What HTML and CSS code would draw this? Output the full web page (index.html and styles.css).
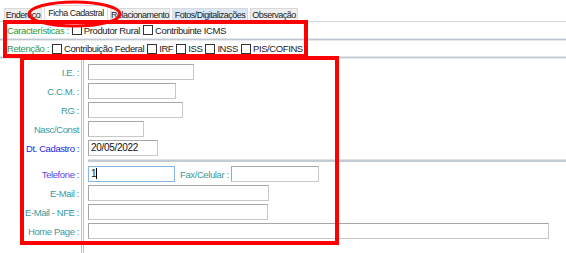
FILE: index.html
```html
<!DOCTYPE html>
<html lang="pt">
<head>
<meta charset="utf-8">
<link rel="stylesheet" href="styles.css">
</head>
<body>
<div class="page">
  <div class="tabs">
    <div class="tab t1">Endereço</div>
    <div class="tab t2 active">Ficha Cadastral</div>
    <div class="tab t3">Relacionamento</div>
    <div class="tab t4 hover">Fotos/Digitalizações</div>
    <div class="tab t5">Observação</div>
  </div>
  <div class="panel">
    <div class="optrow r1">
      <span class="grp green">Características :</span>
      <span class="cb"></span><span class="opt">Produtor Rural</span>
      <span class="cb"></span><span class="opt">Contribuinte ICMS</span>
    </div>
    <div class="sep"></div>
    <div class="optrow r2">
      <span class="grp green2">Retenção :</span>
      <span class="cb"></span><span class="opt">Contribuição Federal</span>
      <span class="cb"></span><span class="opt">IRF</span>
      <span class="cb"></span><span class="opt">ISS</span>
      <span class="cb"></span><span class="opt">INSS</span>
      <span class="cb"></span><span class="opt">PIS/COFINS</span>
    </div>
    <div class="sep"></div>
    <div class="form">
      <div class="frow"><label class="lbl">I.E. :</label><span class="inp w-ie"></span></div>
      <div class="frow"><label class="lbl">C.C.M. :</label><span class="inp w-ccm"></span></div>
      <div class="frow"><label class="lbl">RG :</label><span class="inp w-rg"></span></div>
      <div class="frow"><label class="lbl">Nasc/Const</label><span class="inp w-nasc"></span></div>
      <div class="frow"><label class="lbl blue">Dt. Cadastro :</label><span class="inp w-dt">20/05/2022</span></div>
      <div class="hsep"></div>
      <div class="frow"><label class="lbl violet">Telefone :</label><span class="inp w-tel focus">1<span class="caret"></span></span><label class="lbl2">Fax/Celular :</label><span class="inp w-fax"></span></div>
      <div class="frow"><label class="lbl">E-Mail :</label><span class="inp w-mail"></span></div>
      <div class="frow"><label class="lbl">E-Mail - NFE :</label><span class="inp w-nfe"></span></div>
      <div class="frow last"><label class="lbl">Home Page :</label><span class="inp w-home"></span></div>
    </div>
  </div>
  <svg class="marks" width="566" height="253" viewBox="0 0 566 253">
    <ellipse cx="74.5" cy="14" rx="45.5" ry="12" fill="none" stroke="#ff0000" stroke-width="3"/>
    <rect x="5" y="22" width="301" height="34" fill="none" stroke="#ff0000" stroke-width="4"/>
    <rect x="22" y="58" width="315" height="185" fill="none" stroke="#ff0000" stroke-width="4"/>
  </svg>
</div>
</body>
</html>
```
FILE: styles.css
```css
html, body {
  margin: 0;
  padding: 0;
  background: #ffffff;
}
body {
  font-family: "Liberation Sans", Arial, sans-serif;
  font-size: 9.5px;
  letter-spacing: -0.4px;
  color: #222;
  width: 566px;
  height: 253px;
  overflow: hidden;
}
.page {
  position: relative;
  width: 566px;
  height: 253px;
  overflow: hidden;
}
.tabs {
  display: flex;
  align-items: flex-end;
  height: 22px;
  padding-left: 4px;
  box-sizing: border-box;
  border-bottom: 1px solid #d6d6d6;
}
.tab {
  box-sizing: border-box;
  height: 13px;
  line-height: 12px;
  margin-right: 2px;
  background: #eeeeee;
  border: 1px solid #d9d9d9;
  border-bottom: none;
  color: #222;
  white-space: nowrap;
  text-align: center;
  font-size: 9px;
  letter-spacing: -0.5px;
}
.t1 { width: 38px; }
.t2 { width: 64px; }
.t3 { width: 60px; }
.t4 { width: 76px; }
.t5 { width: 48px; }
.tab.hover { background: #dce7f5; }
.tab.active {
  background: #ffffff;
  height: 17px;
  line-height: 15px;
  margin-bottom: -1px;
}
.optrow {
  display: flex;
  align-items: center;
  padding-left: 7px;
  white-space: nowrap;
}
.r1 { height: 16px; }
.r2 { height: 15px; }
.grp { margin-right: 3px; }
.green { color: #2f9a3c; }
.green2 { color: #2e9a62; }
.cb {
  width: 8px;
  height: 8px;
  border: 1px solid #333;
  background: #fff;
  margin-right: 2px;
}
.opt { margin-right: 3px; }
.sep {
  height: 1px;
  border-top: 1px solid #e3e6ea;
  border-bottom: 1px solid #e8ebee;
  background: #bfc8d2;
}
.form {
  height: 194px;
  box-sizing: border-box;
  padding-top: 5px;
  background:
    linear-gradient(#b9c1ca, #b9c1ca) 81px 0 / 1px 100% no-repeat,
    linear-gradient(#b9c1ca, #b9c1ca) 83px 0 / 1px 100% no-repeat;
}
.frow {
  display: flex;
  align-items: center;
  height: 16px;
  margin-bottom: 3px;
}
.lbl {
  width: 79px;
  text-align: right;
  margin-right: 9px;
  color: #3a9a9e;
  white-space: nowrap;
}
.lbl.blue { color: #2727e6; }
.lbl.violet { color: #5548e0; }
.lbl2 {
  color: #3a9a9e;
  margin-left: 5px;
  margin-right: 2px;
  white-space: nowrap;
}
.inp {
  box-sizing: border-box;
  height: 16px;
  line-height: 14px;
  padding-left: 2px;
  border: 1px solid #a6a6a6;
  border-right-color: #c8c8c8;
  border-bottom-color: #c8c8c8;
  background: #fff;
  color: #111;
  font-size: 10px;
  letter-spacing: -0.3px;
}
.inp.focus { border-color: #86b6e6; }
.caret {
  display: inline-block;
  width: 1px;
  height: 11px;
  background: #000;
  vertical-align: -2px;
}
.w-ie { width: 106px; }
.w-ccm { width: 88px; }
.w-rg { width: 95px; }
.w-nasc { width: 56px; }
.w-dt { width: 70px; }
.w-tel { width: 87px; }
.w-fax { width: 88px; }
.w-mail { width: 181px; }
.w-nfe { width: 180px; }
.w-home { width: 461px; }
.hsep {
  height: 2px;
  margin: 0 0 4px 88px;
  border-top: 1px solid #dde2e7;
  background: #c3cbd4;
}
.frow.last { margin-top: 1px; }
.marks {
  position: absolute;
  left: 0;
  top: 0;
  pointer-events: none;
}
```
